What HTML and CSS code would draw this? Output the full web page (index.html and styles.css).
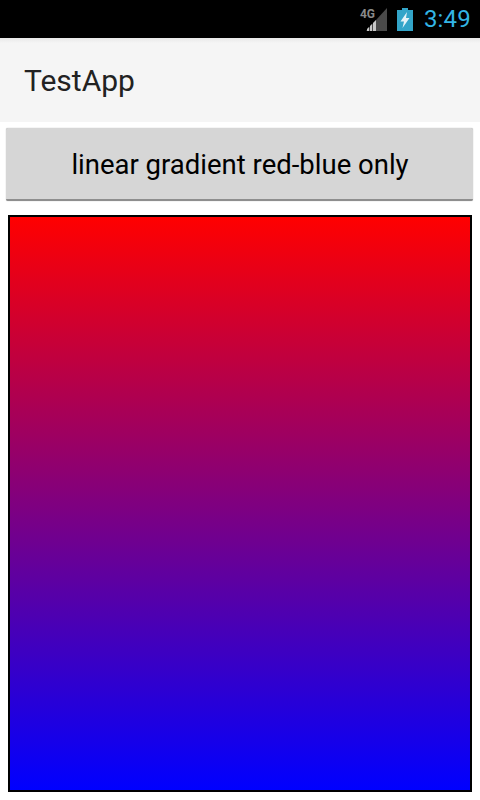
FILE: index.html
```html
<!DOCTYPE html>
<html lang="en">
<head>
  <meta charset="UTF-8" />
  <title>TestApp</title>
  <link rel="stylesheet" href="styles.css">
</head>
<body>
  <div class="status-bar">
    <span class="net-wrap">
      <span class="net-label">4G</span>
      <svg class="signal" width="21" height="23" viewBox="0 0 21 23">
        <polygon points="21,0 21,23 0,23" fill="#4a4a4a" />
        <polygon points="1,23 1,21 3,19 3,23" fill="#c8c8c8" />
        <polygon points="4,23 4,18 6,16 6,23" fill="#c8c8c8" />
        <polygon points="7,23 7,15 10,12 10,23" fill="#c8c8c8" />
      </svg>
    </span>
    <svg class="battery" width="16" height="23" viewBox="0 0 16 23">
      <rect x="5" y="0" width="6" height="2" fill="#33a5c9" />
      <rect x="0" y="2" width="16" height="21" fill="#33a5c9" />
      <polygon points="10,4 3.5,13.5 7,13.5 5.5,20 12.5,10 9,10" fill="#e4f3f8" />
    </svg>
    <span class="clock">3:49</span>
  </div>
  <div class="app-bar">TestApp</div>
  <div class="content">
    <button class="gradient-btn">linear gradient red-blue only</button>
    <div class="canvas"></div>
  </div>
</body>
</html>
```

FILE: styles.css
```css
html, body { margin: 0; padding: 0; }
body {
  width: 480px;
  height: 800px;
  overflow: hidden;
  background: #fff;
  font-family: Roboto, "Liberation Sans", sans-serif;
  display: flex;
  flex-direction: column;
}

.status-bar {
  height: 38px;
  background: #000;
  display: flex;
  align-items: center;
  justify-content: flex-end;
  padding-right: 9px;
}
.net-wrap { position: relative; width: 27px; height: 23px; margin-right: 10px; }
.net-label {
  position: absolute;
  left: 0;
  top: 0;
  font-size: 12px;
  font-weight: 700;
  line-height: 12px;
  color: #8a8a8a;
}
.signal { position: absolute; right: 0; bottom: 0; }
.battery { margin-right: 11px; }
.clock { font-size: 24px; color: #33b5e5; line-height: 38px; letter-spacing: 0.2px; }

.app-bar {
  height: 84px;
  background: linear-gradient(#e8e8e8, #f5f5f5 5px);
  color: #222;
  font-size: 30px;
  line-height: 85px;
  padding-left: 24px;
}

.content {
  flex: 1;
  display: flex;
  flex-direction: column;
  padding: 6px 8px 8px;
}
.gradient-btn {
  height: 73px;
  margin: 0 -1px 0 -2px;
  background: #d6d6d6;
  border: none;
  border-radius: 2px;
  border-bottom: 2px solid #8e8e8e;
  box-shadow: 0 0 1px #999;
  font-family: inherit;
  font-size: 27.5px;
  color: #000;
  padding: 2px 0 0 1px;
}
.canvas {
  flex: 1;
  margin-top: 14px;
  border: 2px solid #000;
  background: linear-gradient(#f00, #00f);
}
```
